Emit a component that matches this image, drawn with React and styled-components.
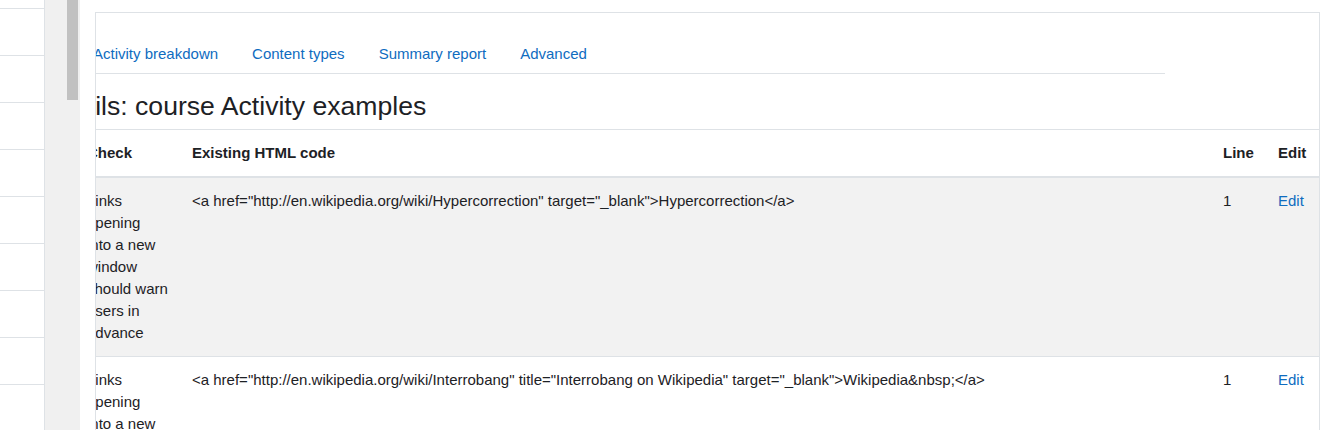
import React from "react";
import styled, { createGlobalStyle } from "styled-components";

const GlobalStyle = createGlobalStyle`
  html, body {
    margin: 0;
    padding: 0;
    background: #ffffff;
    overflow: hidden;
  }
  body {
    font-family: "Liberation Sans", Arial, sans-serif;
    font-size: 15px;
    line-height: 22px;
    color: #1d2125;
  }
`;

const tabs = ["Activity breakdown", "Content types", "Summary report", "Advanced"];

const checkText = "Links opening into a new window should warn users in advance";

const rows = [
  {
    check: checkText,
    code: '<a href="http://en.wikipedia.org/wiki/Hypercorrection" target="_blank">Hypercorrection</a>',
    line: 1,
  },
  {
    check: checkText,
    code: '<a href="http://en.wikipedia.org/wiki/Interrobang" title="Interrobang on Wikipedia" target="_blank">Wikipedia&nbsp;</a>',
    line: 1,
  },
];

function App() {
  return (
    <Page>
      <GlobalStyle />
      <Sidebar>
        <SideItem first />
        {Array.from({ length: 9 }).map((_, i) => (
          <SideItem key={i} />
        ))}
      </Sidebar>
      <Gutter>
        <Thumb />
      </Gutter>
      <Main>
        <Panel>
          <Inner>
            <TabNav>
              {tabs.map((t) => (
                <TabLink key={t} href="#">
                  {t}
                </TabLink>
              ))}
            </TabNav>
            <Heading>Details: course Activity examples</Heading>
            <Table>
              <colgroup>
                <col style={{ width: 105 }} />
                <col />
                <col style={{ width: 55 }} />
                <col style={{ width: 53 }} />
              </colgroup>
              <thead>
                <tr>
                  <Th>Check</Th>
                  <Th>Existing HTML code</Th>
                  <Th>Line</Th>
                  <Th>Edit</Th>
                </tr>
              </thead>
              <tbody>
                {rows.map((r, i) => (
                  <Tr key={i} striped={i % 2 === 0}>
                    <Td>{r.check}</Td>
                    <Td>{r.code}</Td>
                    <Td>{r.line}</Td>
                    <Td>
                      <EditLink href="#">Edit</EditLink>
                    </Td>
                  </Tr>
                ))}
              </tbody>
            </Table>
          </Inner>
        </Panel>
      </Main>
    </Page>
  );
}

export default App;

const Page = styled.div`
  display: flex;
  height: 430px;
  width: 1328px;
  overflow: hidden;
`;

const Sidebar = styled.div`
  width: 44px;
  flex-shrink: 0;
  border-right: 1px solid #dee2e6;
  display: flex;
  flex-direction: column;
`;

const SideItem = styled.div`
  height: ${(p) => (p.first ? "8px" : "46px")};
  flex-shrink: 0;
  border-bottom: 1px solid #dee2e6;
`;

const Gutter = styled.div`
  width: 35px;
  flex-shrink: 0;
  background: #f0f0f0;
  display: flex;
  justify-content: flex-end;
  padding-right: 2px;
  box-sizing: border-box;
`;

const Thumb = styled.div`
  width: 11px;
  height: 100px;
  background: #c1c1c1;
`;

const Main = styled.div`
  flex: 1;
  padding: 12px 8px 0 15px;
  min-width: 0;
`;

const Panel = styled.div`
  border: 1px solid #dee2e6;
  border-bottom: none;
  overflow: hidden;
  height: 100%;
  box-sizing: border-box;
`;

const Inner = styled.div`
  margin-left: -21px;
  padding-top: 22px;
`;

const TabNav = styled.nav`
  display: flex;
  padding-left: 1px;
  margin-right: 154px;
  border-bottom: 1px solid #dee2e6;
`;

const TabLink = styled.a`
  padding: 8px 17px;
  color: #0f6cbf;
  text-decoration: none;
  white-space: nowrap;
`;

const Heading = styled.h2`
  font-size: 26.6px;
  font-weight: 400;
  line-height: 32px;
  margin: 16px 0 7px -36px;
  white-space: nowrap;
`;

const Table = styled.table`
  width: 100%;
  table-layout: fixed;
  border-collapse: collapse;
`;

const Th = styled.th`
  text-align: left;
  font-weight: 700;
  padding: 12px;
  vertical-align: bottom;
  border-top: 1px solid #dee2e6;
  border-bottom: 2px solid #dee2e6;
  white-space: nowrap;
`;

const Tr = styled.tr`
  background: ${(p) => (p.striped ? "#f2f2f2" : "#ffffff")};
`;

const Td = styled.td`
  padding: 12px;
  vertical-align: top;
  border-top: 1px solid #dee2e6;
  overflow-wrap: break-word;
`;

const EditLink = styled.a`
  color: #0f6cbf;
  text-decoration: none;
`;
